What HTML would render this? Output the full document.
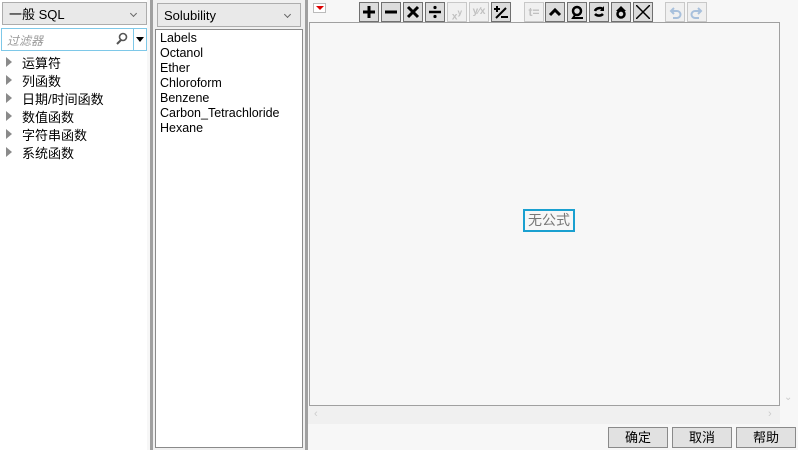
<!DOCTYPE html>
<html><head><meta charset="utf-8"><style>
*{margin:0;padding:0;box-sizing:border-box}
body{width:798px;height:450px;overflow:hidden;background:#f7f7f7;font-family:"Liberation Sans","Noto Sans CJK SC",sans-serif;font-size:12px;color:#000;position:relative}
.a{position:absolute}
.sel{border:1px solid #adadad;background:#e9e9e9;padding:0 6px;font-size:13px;display:flex;align-items:center}
.sel:after{content:"";position:absolute;right:10px;top:8px;width:4px;height:4px;border-right:1px solid #666;border-bottom:1px solid #666;transform:rotate(45deg)}
.tb{position:absolute;top:2px;width:20px;height:20px;border:1px solid #707070;background:#dcdcdc;font-weight:bold;text-align:center;line-height:18px;font-size:16px}
.tb svg{position:absolute;left:2px;top:2px}
.tb.d{border-color:#c8c8c8;background:#f0f0f0;color:#c0c0c0;font-size:10px}
.btn{position:absolute;top:427px;width:60px;height:21px;border:1px solid #8a8a8a;background:#e1e1e1;text-align:center;line-height:19px;font-size:13px}
.tri{position:absolute;left:6px;width:0;height:0;border-left:6px solid #8a8a8a;border-top:5px solid transparent;border-bottom:5px solid transparent}
.ti{position:absolute;left:22px;font-size:13px}
.li{position:absolute;left:160px;font-size:12.5px}
</style></head><body>
<div class="a" style="left:0;top:0;width:147px;height:450px;background:#fff"></div>
<div class="a" style="left:150px;top:0;width:3px;height:450px;background:#a0a0a0"></div>
<div class="a" style="left:153px;top:0;width:155px;height:450px;background:#f0f0f0"></div>
<div class="a" style="left:305px;top:0;width:3px;height:450px;background:#a0a0a0"></div>
<div class="a sel" style="left:2px;top:2px;width:145px;height:23px">一般 SQL</div>
<div class="a" style="left:1px;top:28px;width:146px;height:23px;border:1px solid #7ec8e8;background:#fff"></div>
<div class="a" style="left:7px;top:32px;color:#999;font-style:italic;font-size:12px">过滤器</div>
<svg class="a" style="left:115px;top:32px" width="14" height="14"><circle cx="8" cy="5" r="3.5" fill="none" stroke="#555" stroke-width="1.6"/><line x1="6" y1="8" x2="2" y2="12" stroke="#555" stroke-width="2"/></svg>
<div class="a" style="left:133px;top:29px;width:1px;height:21px;background:#7ec8e8"></div>
<div class="a" style="left:136px;top:37px;border-top:5px solid #000;border-left:4px solid transparent;border-right:4px solid transparent"></div>
<div class="tri" style="top:57px"></div><div class="ti" style="top:53px">运算符</div>
<div class="tri" style="top:75px"></div><div class="ti" style="top:71px">列函数</div>
<div class="tri" style="top:93px"></div><div class="ti" style="top:89px">日期/时间函数</div>
<div class="tri" style="top:111px"></div><div class="ti" style="top:107px">数值函数</div>
<div class="tri" style="top:129px"></div><div class="ti" style="top:125px">字符串函数</div>
<div class="tri" style="top:147px"></div><div class="ti" style="top:143px">系统函数</div>
<div class="a sel" style="left:157px;top:3px;width:144px;height:24px">Solubility</div>
<div class="a" style="left:155px;top:29px;width:148px;height:419px;border:1px solid #8a8a8a;background:#fff"></div>
<div class="li" style="top:31px">Labels</div>
<div class="li" style="top:46px">Octanol</div>
<div class="li" style="top:61px">Ether</div>
<div class="li" style="top:76px">Chloroform</div>
<div class="li" style="top:91px">Benzene</div>
<div class="li" style="top:106px">Carbon_Tetrachloride</div>
<div class="li" style="top:121px">Hexane</div>
<div class="a" style="left:313px;top:3px;width:13px;height:10px;border:1px solid #bbb;background:#fff"></div>
<div class="a" style="left:316px;top:6px;border-top:4px solid #d00;border-left:4px solid transparent;border-right:4px solid transparent"></div>
<div class="tb" style="left:359px"><svg width="14" height="14"><path d="M7 1V13M1 7H13" stroke="#000" stroke-width="3"/></svg></div>
<div class="tb" style="left:381px"><svg width="14" height="14"><path d="M1 7H13" stroke="#000" stroke-width="3"/></svg></div>
<div class="tb" style="left:403px"><svg width="14" height="14"><path d="M2 2L12 12M12 2L2 12" stroke="#000" stroke-width="3"/></svg></div>
<div class="tb" style="left:425px"><svg width="14" height="14"><path d="M1 7H13" stroke="#000" stroke-width="2.5"/><circle cx="7" cy="2.5" r="1.6"/><circle cx="7" cy="11.5" r="1.6"/></svg></div>
<div class="tb d" style="left:447px">x<sup>y</sup></div>
<div class="tb d" style="left:469px">y⁄x</div>
<div class="tb" style="left:491px"><svg width="14" height="14"><path d="M3 1V7M0 4H6M2 13L12 3M7 12H14" stroke="#000" stroke-width="2"/></svg></div>
<div class="tb d" style="left:524px;font-size:12px">t=</div>
<div class="tb" style="left:545px"><svg width="14" height="14"><path d="M2 10L7 5L12 10" fill="none" stroke="#000" stroke-width="3"/></svg></div>
<div class="tb" style="left:567px"><svg width="14" height="14"><circle cx="7" cy="6" r="4" fill="none" stroke="#000" stroke-width="2.5"/><path d="M5 10L3 13H13" fill="none" stroke="#000" stroke-width="2"/></svg></div>
<div class="tb" style="left:589px"><svg width="14" height="14"><path d="M11 4A5 4 0 0 0 3 6M3 9A5 4 0 0 0 11 9" fill="none" stroke="#000" stroke-width="2.5"/><path d="M12 1V6H8Z"/></svg></div>
<div class="tb" style="left:611px"><svg width="14" height="14"><path d="M7 1L2 6H12Z"/><circle cx="7" cy="9" r="3.5" fill="none" stroke="#000" stroke-width="2.5"/></svg></div>
<div class="tb" style="left:633px"><svg width="14" height="14"><path d="M0 0L14 14M14 0L0 14" stroke="#000" stroke-width="1.5"/></svg></div>
<div class="tb d" style="left:665px"><svg width="14" height="14"><path d="M4 6H9A3.5 3.5 0 0 1 9 13H5M6 3L3 6L6 9" fill="none" stroke="#a8c0dc" stroke-width="2"/></svg></div>
<div class="tb d" style="left:687px"><svg width="14" height="14"><path d="M10 6H5A3.5 3.5 0 0 0 5 13H9M8 3L11 6L8 9" fill="none" stroke="#a8c0dc" stroke-width="2"/></svg></div>
<div class="a" style="left:309px;top:22px;width:471px;height:384px;border:1px solid #a0a0a0;background:#f7f7f7"></div>
<div class="a" style="left:523px;top:209px;width:52px;height:23px;border:2px solid #1aa0d0;color:#777;font-size:14px;text-align:center;line-height:19px">无公式</div>
<div class="a" style="left:308px;top:406px;width:472px;height:18px;background:#f0f0f0"></div>
<div class="a" style="left:314px;top:408px;color:#ccc;font-size:11px">‹</div>
<div class="a" style="left:768px;top:408px;color:#ccc;font-size:11px">›</div>
<div class="a" style="left:784px;top:392px;color:#ccc;font-size:10px">⌄</div>
<div class="btn" style="left:608px">确定</div>
<div class="btn" style="left:672px">取消</div>
<div class="btn" style="left:736px">帮助</div>
</body></html>
